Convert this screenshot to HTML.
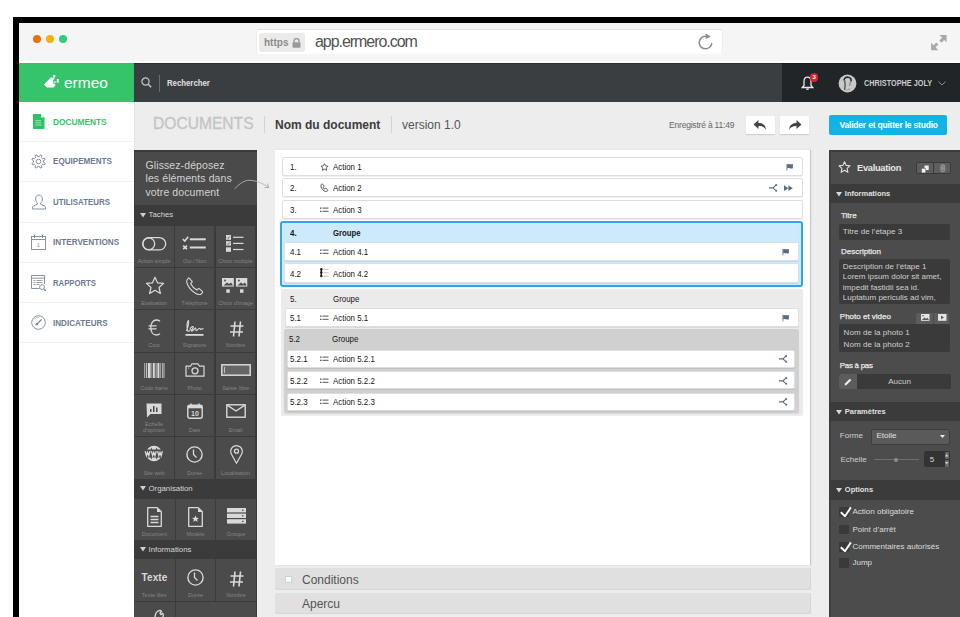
<!DOCTYPE html>
<html><head><meta charset="utf-8">
<style>
*{margin:0;padding:0;box-sizing:border-box}
html,body{width:960px;height:617px;overflow:hidden;background:#fff;font-family:"Liberation Sans",sans-serif}
.a{position:absolute}
#frame{left:13px;top:17px;width:960px;height:620px;background:#000}
#chrome{left:19px;top:23px;width:941px;height:40px;background:#f5f5f5}
.dot{width:8px;height:8px;border-radius:50%;top:35px}
#url{left:256px;top:29px;width:467px;height:25px;background:#fff;border-top:1px solid #e2e2e2;border-left:1px solid #ececec;border-right:1px solid #ececec;border-radius:3px}
#secbox{left:259px;top:33px;width:46px;height:19px;background:#ebebeb;border-radius:3px;color:#8c8c8c;font-size:10px;font-weight:bold;line-height:19px;padding-left:5px}
#urltext{left:315px;top:32px;font-size:16px;color:#525252;line-height:20px;letter-spacing:-1.05px}
#logo{left:19px;top:63px;width:115px;height:39px;background:#35c46a}
#hdr{left:134px;top:63px;width:648px;height:39px;background:#3b3e41}
#hdr2{left:782px;top:63px;width:178px;height:39px;background:#222528}
#side{left:19px;top:102px;width:115px;height:515px;background:#fff}
.mi{left:19px;width:115px;height:40px;border-bottom:1px solid #eeeff1}
.mt{position:absolute;font-size:9.3px;font-weight:bold;color:#6e7a8e;left:52.9px;line-height:11px;white-space:nowrap}
#main{left:134px;top:102px;width:826px;height:515px;background:#ededed;border-left:1px solid #e4e4e4}
#tools{left:134px;top:150px;width:123px;height:467px;background:#4a4a4a}
.lbl{font-size:5.5px;color:#858585;text-align:center;line-height:8px;white-space:nowrap}
.dt{font-size:8.8px;color:#161616;line-height:10px;white-space:nowrap;transform:scaleX(0.9);transform-origin:0 0}
#doc{left:275px;top:150px;width:535px;height:415px;background:#fff}
#rp{left:829px;top:150px;width:131px;height:467px;background:#4a4a4a}
</style></head><body>
<div class="a" id="frame"></div>
<div class="a" id="chrome"></div>
<div class="a dot" style="left:33px;background:#e8710a"></div>
<div class="a dot" style="left:46px;background:#f5b10f"></div>
<div class="a dot" style="left:59px;background:#35c97a"></div>
<div class="a" id="url"></div>
<div class="a" id="secbox">https</div>
<div class="a" id="urltext">app.ermero.com</div>
<div class="a" style="left:19px;top:61px;width:941px;height:2px;background:#fff"></div>
<div class="a" id="logo"></div>
<div class="a" id="hdr"></div>
<div class="a" id="hdr2"></div>
<div class="a" style="left:134px;top:63px;width:826px;height:1px;background:rgba(0,0,0,0.25)"></div>

<!-- browser chrome details -->
<svg class="a" style="left:292px;top:38px" width="9" height="10" viewBox="0 0 9 10"><path d="M2 4.5V3a2.5 2.5 0 0 1 5 0v1.5" fill="none" stroke="#9a9a9a" stroke-width="1.4"/><rect x="0.5" y="4.3" width="8" height="5.5" rx="1" fill="#9a9a9a"/></svg>
<svg class="a" style="left:697px;top:33px" width="17" height="17" viewBox="0 0 17 17"><path d="M8.8 3.2A6.3 6.3 0 1 0 14.8 10" fill="none" stroke="#8c8c8c" stroke-width="1.5"/><path d="M8.7 0.6L8.7 6.1 13.8 3.4z" fill="#8c8c8c"/></svg>
<svg class="a" style="left:929px;top:33px" width="18" height="18" viewBox="0 0 18 18"><path d="M10.4 2.1H17.6V9.3L15.2 6.9 12.4 9.7 10.3 7.6 13.1 4.8z M2.1 9.8L4.5 12.2 7.3 9.4 9.4 11.5 6.6 14.3 9.2 17.2H2.1z" fill="#a9a9a9"/></svg>
<!-- logo -->
<svg class="a" style="left:40px;top:72px" width="24" height="20" viewBox="0 0 24 20"><path d="M3.9 12.5L11.2 5.2 14.6 6.6 13 8.6 13.2 11.2 15.8 12.8 13.6 15.6 7 15.5z" fill="#fff"/><rect x="13.2" y="3" width="2" height="2.6" fill="#fff"/><rect x="16.8" y="7" width="2" height="3.6" fill="#fff"/><rect x="13.8" y="9.2" width="1.8" height="1.8" fill="#fff" opacity="0.8"/></svg>
<div class="a" style="left:64px;top:74px;font-size:15.5px;color:#fff;line-height:18px">ermeo</div>
<!-- search -->
<svg class="a" style="left:141px;top:77px" width="11" height="11" viewBox="0 0 11 11"><circle cx="4.5" cy="4.5" r="3.6" fill="none" stroke="#c8c8c8" stroke-width="1.2"/><path d="M7.2 7.2L10.2 10.2" stroke="#c8c8c8" stroke-width="1.4"/></svg>
<div class="a" style="left:159px;top:75px;width:1px;height:17px;background:#6a6d70"></div>
<div class="a" style="left:166.5px;top:78px;font-size:9px;font-weight:bold;color:#e0e0e0;line-height:11px;white-space:nowrap;transform:scaleX(0.865);transform-origin:0 0">Rechercher</div>
<!-- bell -->
<svg class="a" style="left:801px;top:75px" width="13" height="16" viewBox="0 0 13 16"><path d="M6.5 2.2C4 2.2 3 4.3 3 6.5v4L1.3 12.5h10.4L10 10.5v-4C10 4.3 9 2.2 6.5 2.2z" fill="none" stroke="#e6e6e6" stroke-width="1.3"/><path d="M5 13.5a1.5 1.5 0 0 0 3 0" fill="#e6e6e6"/></svg>
<div class="a" style="left:810px;top:73.2px;width:8.4px;height:8.4px;border-radius:50%;background:#e0202e;color:#fff;font-size:6px;line-height:8.4px;text-align:center;font-weight:bold">3</div>
<!-- avatar -->
<svg class="a" style="left:838px;top:74px" width="19" height="19" viewBox="0 0 19 19"><circle cx="9.5" cy="9.5" r="8.9" fill="#c9c9c9"/><path d="M6 6.5C6 4 8 3 10 3.2 12.5 3.5 13.5 5 13 7.5" fill="none" stroke="#2a2a2a" stroke-width="1.6"/><path d="M7 6.5C6.5 9 7.5 10.5 7 12.5 6.8 14 6.5 15 7 16" fill="none" stroke="#333" stroke-width="1.1"/><path d="M12 8c.3 1.5 0 3-.8 3.8" fill="none" stroke="#555" stroke-width="0.8"/><path d="M9 16.5c.5-1 1.5-1.5 3-1.5" fill="none" stroke="#777" stroke-width="0.8"/></svg>
<div class="a" style="left:863.5px;top:78px;font-size:9px;font-weight:bold;color:#c9cbcd;line-height:11px;white-space:nowrap;transform:scaleX(0.81);transform-origin:0 0">CHRISTOPHE JOLY</div>
<svg class="a" style="left:938px;top:81px" width="8" height="5" viewBox="0 0 8 5"><path d="M0.5 0.5L4 4 7.5 0.5" fill="none" stroke="#8a8c8e" stroke-width="1"/></svg>
<div class="a" id="side"></div>
<div class="a" id="main"></div>


<!-- main header -->
<div class="a" style="left:152.5px;top:113.5px;font-size:16.7px;color:#c4c4c4;line-height:20px;white-space:nowrap;transform:scaleX(0.935);transform-origin:0 0;-webkit-text-stroke:0.3px #c4c4c4">DOCUMENTS</div>
<div class="a" style="left:264px;top:116px;width:1px;height:17px;background:#d4d4d4"></div>
<div class="a" style="left:275px;top:118px;font-size:12px;font-weight:bold;color:#3c3c3c;line-height:14px">Nom du document</div>
<div class="a" style="left:391px;top:116px;width:1px;height:17px;background:#d4d4d4"></div>
<div class="a" style="left:402px;top:118px;font-size:12px;color:#555;line-height:14px">version 1.0</div>
<div class="a" style="left:669px;top:120px;font-size:8.5px;color:#666;letter-spacing:-0.2px;line-height:11px">Enregistré à 11:49</div>
<div class="a" style="left:746px;top:116px;width:29px;height:18px;background:#fff;box-shadow:0 1px 1px rgba(0,0,0,0.12)"></div>
<svg class="a" style="left:752px;top:119px" width="17" height="12" viewBox="0 0 17 12"><path d="M6.5 1L1.5 5.5 6.5 10V7C10.5 7 12.5 8 14 11 13.5 6 11 4 6.5 4z" fill="#444"/></svg>
<div class="a" style="left:780px;top:116px;width:29px;height:18px;background:#fff;box-shadow:0 1px 1px rgba(0,0,0,0.12)"></div>
<svg class="a" style="left:786px;top:119px" width="17" height="12" viewBox="0 0 17 12"><path d="M10.5 1L15.5 5.5 10.5 10V7C6.5 7 4.5 8 3 11 3.5 6 6 4 10.5 4z" fill="#444"/></svg>
<div class="a" style="left:829px;top:115px;width:118px;height:20px;background:#12b2e6;border-radius:2px;color:#fff;font-size:8.5px;font-weight:bold;letter-spacing:-0.2px;line-height:20px;padding-left:10.5px;white-space:nowrap">Valider et quitter le studio</div>
<!-- sidebar items -->
<div class="a" style="left:19px;top:141px;width:115px;height:1px;background:#f0f1f3"></div>
<div class="a" style="left:19px;top:181px;width:115px;height:1px;background:#f0f1f3"></div>
<div class="a" style="left:19px;top:222px;width:115px;height:1px;background:#f0f1f3"></div>
<div class="a" style="left:19px;top:262px;width:115px;height:1px;background:#f0f1f3"></div>
<div class="a" style="left:19px;top:302px;width:115px;height:1px;background:#f0f1f3"></div>
<div class="a" style="left:19px;top:342px;width:115px;height:1px;background:#f0f1f3"></div>
<svg class="a" style="left:33px;top:114px" width="12" height="15" viewBox="0 0 12 15"><path d="M0 0H8L11.5 3.5V15H0z" fill="#2fc165"/><path d="M8 0V3.5H11.5" fill="#fff" opacity="0.85"/><g fill="#fff" opacity="0.45"><rect x="2.3" y="6" width="6" height="1.2"/><rect x="2.3" y="8.2" width="6" height="1.2"/><rect x="2.3" y="10.4" width="6.5" height="1.2"/></g></svg>
<div class="a mt" style="top:117.36px;transform:scaleX(0.894);transform-origin:0 0;color:#35c46a">DOCUMENTS</div>
<svg class="a" style="left:31px;top:153.5px" width="15" height="15" viewBox="0 0 15 15"><path d="M12.42 8.40 L14.10 9.14 L13.33 11.01 L11.61 10.34 L10.34 11.61 L11.01 13.33 L9.14 14.10 L8.40 12.42 L6.60 12.42 L5.86 14.10 L3.99 13.33 L4.66 11.61 L3.39 10.34 L1.67 11.01 L0.90 9.14 L2.58 8.40 L2.58 6.60 L0.90 5.86 L1.67 3.99 L3.39 4.66 L4.66 3.39 L3.99 1.67 L5.86 0.90 L6.60 2.58 L8.40 2.58 L9.14 0.90 L11.01 1.67 L10.34 3.39 L11.61 4.66 L13.33 3.99 L14.10 5.86 L12.42 6.60z" fill="none" stroke="#8790a2" stroke-width="0.95" stroke-linejoin="round"/><circle cx="7.5" cy="7.5" r="2.3" fill="none" stroke="#8790a2" stroke-width="0.95"/></svg>
<div class="a mt" style="top:156.16px;transform:scaleX(0.871);transform-origin:0 0">EQUIPEMENTS</div>
<svg class="a" style="left:32px;top:194px" width="14" height="16" viewBox="0 0 14 16"><path d="M7 1C4.8 1 3.6 2.8 3.6 5c0 1.8.8 3.2 1.8 4v1.2L1 12.2c-.4.2-.5.5-.5.9V15h13v-1.9c0-.4-.1-.7-.5-.9L8.6 10.2V9c1-.8 1.8-2.2 1.8-4C10.4 2.8 9.2 1 7 1z" fill="none" stroke="#7d879a" stroke-width="0.9"/></svg>
<div class="a mt" style="top:197.06px;transform:scaleX(0.852);transform-origin:0 0">UTILISATEURS</div>
<svg class="a" style="left:31px;top:234px" width="15" height="16" viewBox="0 0 15 16"><rect x="0.5" y="2.5" width="14" height="13" fill="none" stroke="#7d879a" stroke-width="0.9"/><path d="M0.5 5.5h14" stroke="#7d879a" stroke-width="0.9"/><path d="M3.5 0.5v3.5M11.5 0.5v3.5" stroke="#7d879a" stroke-width="1.1"/><text x="6" y="12.5" font-size="5" fill="#7d879a" font-family="Liberation Sans">1</text></svg>
<div class="a mt" style="top:237.16px;transform:scaleX(0.880);transform-origin:0 0">INTERVENTIONS</div>
<svg class="a" style="left:31px;top:275px" width="16" height="17" viewBox="0 0 16 17"><path d="M13.5 9V0.5H0.5v13h8" fill="none" stroke="#7d879a" stroke-width="0.9"/><path d="M0.5 3.2h13" stroke="#7d879a" stroke-width="0.9"/><g stroke="#7d879a" stroke-width="0.8"><path d="M2.5 5.5h2M2.5 7.5h2M2.5 9.5h2M5.5 5.5h6M5.5 7.5h6M5.5 9.5h3"/></g><circle cx="11" cy="12" r="2.4" fill="#fff" stroke="#7d879a" stroke-width="0.9"/><path d="M12.8 13.8L15 16" stroke="#7d879a" stroke-width="1.1"/></svg>
<div class="a mt" style="top:277.71px;transform:scaleX(0.829);transform-origin:0 0">RAPPORTS</div>
<svg class="a" style="left:31px;top:315px" width="15" height="15" viewBox="0 0 15 15"><circle cx="7.5" cy="7.5" r="6.8" fill="none" stroke="#7d879a" stroke-width="0.9"/><path d="M5.5 9.5L10.5 4.5" stroke="#7d879a" stroke-width="1.2"/><circle cx="5.8" cy="9.2" r="1.2" fill="#7d879a"/><path d="M3 4.5A5 5 0 0 1 7.5 2.5" fill="none" stroke="#7d879a" stroke-width="0.6"/></svg>
<div class="a mt" style="top:318.11px;transform:scaleX(0.871);transform-origin:0 0">INDICATEURS</div>
<div class="a" id="tools"></div>
<div class="a" style="left:134px;top:150px;width:123px;height:1.5px;background:#3a3a3a"></div>
<div class="a" style="left:134px;top:150px;width:1px;height:467px;background:#3c3c3c"></div>

<div class="a" style="left:145.5px;top:158.5px;font-size:10.5px;color:#d2d2d2;line-height:13.8px;white-space:nowrap;letter-spacing:0.1px">Glissez-déposez<br>les éléments dans<br>votre document</div>
<svg class="a" style="left:232px;top:176px" width="42" height="18" viewBox="0 0 42 18"><path d="M2.8 12.7C8 7 13 4.3 17 4.3 24 4.3 31 7.5 36.9 11.4" fill="none" stroke="#b4b4b4" stroke-width="0.9"/><path d="M35.3 7.5L36.9 11.4 32.5 11.6" fill="none" stroke="#a8a8a8" stroke-width="0.9"/></svg>
<!--TOOLS-->
<div class="a" style="left:134px;top:205px;width:123px;height:412px;background:#3b3b3b"></div>
<div class="a" style="left:134px;top:205.5px;width:123px;height:19.5px;background:#3b3b3b"></div>
<svg class="a" style="left:139.5px;top:213.05px" width="6" height="5" viewBox="0 0 6 5"><path d="M0 0h6L3 4.5z" fill="#d0d0d0"/></svg>
<div class="a" style="left:148.5px;top:210.25px;font-size:7.8px;color:#d6d6d6;line-height:10px">Taches</div>
<div class="a" style="left:134px;top:225.5px;width:40px;height:41.5px;background:#4b4b4b"></div>
<div class="a" style="left:141.8px;top:236.5px;line-height:0"><svg width="25" height="14" viewBox="0 0 25 14"><rect x="0.7" y="0.7" width="23" height="12.2" rx="6.1" fill="none" stroke="#d9d9d9" stroke-width="1.3"/><circle cx="6.8" cy="6.8" r="5.9" fill="none" stroke="#d9d9d9" stroke-width="1.3"/></svg></div>
<div class="a lbl" style="left:134.0px;top:256.5px;width:40px">Action simple</div>
<div class="a" style="left:175px;top:225.5px;width:39.2px;height:41.5px;background:#4b4b4b"></div>
<div class="a" style="left:182px;top:235.5px;line-height:0"><svg width="26" height="16" viewBox="0 0 26 16"><path d="M0.8 3.2L2.8 5 6.2 0.8" fill="none" stroke="#d9d9d9" stroke-width="1.6"/><rect x="7.8" y="2.3" width="16" height="2" fill="#d9d9d9"/><path d="M1.2 9.6L5 13.2M5 9.6L1.2 13.2" stroke="#d9d9d9" stroke-width="1.6"/><rect x="7.8" y="10.5" width="16" height="2" fill="#d9d9d9"/></svg></div>
<div class="a lbl" style="left:175.0px;top:256.5px;width:39.2px">Oui / Non</div>
<div class="a" style="left:215.8px;top:225.5px;width:39.7px;height:41.5px;background:#4b4b4b"></div>
<div class="a" style="left:226px;top:234.8px;line-height:0"><svg width="20" height="18" viewBox="0 0 20 18"><g fill="#d9d9d9"><rect x="0" y="0" width="5" height="4.8"/><rect x="0" y="6.2" width="5" height="4.4"/><rect x="0" y="12.3" width="5" height="4.5"/><rect x="7" y="1.7" width="10.5" height="1.2"/><rect x="7" y="7.8" width="10.5" height="1.2"/><rect x="7" y="13.9" width="10.5" height="1.2"/></g><path d="M1 2.5l1 1 2-2.2M1 8.5l1 1 2-2.2" fill="none" stroke="#4b4b4b" stroke-width="0.8"/></svg></div>
<div class="a lbl" style="left:215.8px;top:256.5px;width:39.7px">Choix multiple</div>
<div class="a" style="left:134px;top:267.8px;width:40px;height:41.5px;background:#4b4b4b"></div>
<div class="a" style="left:144.5px;top:275.8px;line-height:0"><svg width="20" height="19" viewBox="0 0 20 19"><path d="M10 1.2l2.5 5.6 6.1.6-4.6 4.1 1.4 6-5.4-3.2-5.4 3.2 1.4-6L1.4 7.4l6.1-.6z" fill="none" stroke="#d9d9d9" stroke-width="1.2" stroke-linejoin="round"/></svg></div>
<div class="a lbl" style="left:134.0px;top:299.0px;width:40px">Evaluation</div>
<div class="a" style="left:175px;top:267.8px;width:39.2px;height:41.5px;background:#4b4b4b"></div>
<div class="a" style="left:185.5px;top:276.5px;line-height:0"><svg width="18" height="18" viewBox="0 0 18 18"><path d="M3.2 1.2L5.8 4c.4.4.4 1 0 1.4L4.6 6.6c1.3 2.8 3.5 5 6.3 6.4l1.2-1.2c.4-.4 1-.4 1.4 0l2.8 2.6c.4.4.4 1 0 1.4l-1.4 1.4C13.5 18 12 17.5 10 16.5 6 14.4 3.2 11.2 1.4 7.2.6 5.4.4 4 1 3l1.3-1.8c.3-.4.6-.4.9 0z" fill="none" stroke="#d9d9d9" stroke-width="1.1"/></svg></div>
<div class="a lbl" style="left:175.0px;top:299.0px;width:39.2px">Téléphone</div>
<div class="a" style="left:215.8px;top:267.8px;width:39.7px;height:41.5px;background:#4b4b4b"></div>
<div class="a" style="left:221.8px;top:278.2px;line-height:0"><svg width="26" height="15" viewBox="0 0 26 15"><g fill="#d9d9d9"><rect x="0" y="0" width="11.8" height="8.6"/><rect x="13.9" y="0" width="11.4" height="8.6"/><rect x="4.3" y="11.3" width="3.5" height="3.5"/><rect x="18" y="11.3" width="3.5" height="3.5"/></g><g fill="#4b4b4b"><path d="M1.5 7.5L5 4.5 7 6 9 4.5 11 7.5z"/><path d="M15.4 7.5L18.9 4.5 20.9 6 22.9 4.5 24.8 7.5z"/><circle cx="3" cy="2.5" r="1"/><circle cx="16.9" cy="2.5" r="1"/></g></svg></div>
<div class="a lbl" style="left:215.8px;top:299.0px;width:39.7px">Choix d'image</div>
<div class="a" style="left:134px;top:310.2px;width:40px;height:41.5px;background:#4b4b4b"></div>
<div class="a" style="left:147.5px;top:319px;line-height:0"><svg width="13" height="17" viewBox="0 0 13 17"><path d="M12 2.2C11 1.4 9.8 1 8.5 1 5 1 2.8 4.2 2.8 8.5S5 16 8.5 16c1.3 0 2.5-.4 3.5-1.2" fill="none" stroke="#d9d9d9" stroke-width="1.3"/><path d="M0.5 6.8h8M0.5 9.8h8" stroke="#d9d9d9" stroke-width="1.2"/></svg></div>
<div class="a lbl" style="left:134.0px;top:340.8px;width:40px">Cout</div>
<div class="a" style="left:175px;top:310.2px;width:39.2px;height:41.5px;background:#4b4b4b"></div>
<div class="a" style="left:185px;top:319px;line-height:0"><svg width="19" height="17" viewBox="0 0 19 17"><path d="M1.5 12C3 8 4 4 3.5 1.5 2 2 1.5 7 2.5 11.5c.5 1.3 2 1 3.5-1.5M5 10c1-2.5 3-3 3.3-1.8C8.5 9.5 6 11 6.5 12s3-2.5 4-3c.8.3-.2 2.5.8 2.7 1 .1 2.2-2.3 3.2-2.5.8 0 .5 1.5 1.5 1.2l2.5-.8" fill="none" stroke="#d9d9d9" stroke-width="1.1"/><rect x="0.5" y="15" width="18" height="1.8" fill="#d9d9d9"/></svg></div>
<div class="a lbl" style="left:175.0px;top:340.8px;width:39.2px">Signature</div>
<div class="a" style="left:215.8px;top:310.2px;width:39.7px;height:41.5px;background:#4b4b4b"></div>
<div class="a" style="left:229.8px;top:320.5px;line-height:0"><svg width="14" height="16" viewBox="0 0 14 16"><path d="M5 0.5L3.5 15.5M10.5 0.5L9 15.5M0.5 5h13M0 11h13" stroke="#d9d9d9" stroke-width="1.6"/></svg></div>
<div class="a lbl" style="left:215.8px;top:340.8px;width:39.7px">Nombre</div>
<div class="a" style="left:134px;top:352.5px;width:40px;height:41.5px;background:#4b4b4b"></div>
<div class="a" style="left:143.5px;top:362.8px;line-height:0"><svg width="21" height="15" viewBox="0 0 21 15"><g fill="#d9d9d9"><rect x="0" y="0" width="1" height="15" opacity="0.6"/><rect x="1.8" y="0" width="1.4" height="15" opacity="0.8"/><rect x="4" y="0" width="2.6" height="15"/><rect x="7.4" y="0" width="0.9" height="15" opacity="0.7"/><rect x="9" y="0" width="1.8" height="15"/><rect x="11.6" y="0" width="1" height="15" opacity="0.8"/><rect x="13.4" y="0" width="2" height="15"/><rect x="16.2" y="0" width="0.9" height="15" opacity="0.7"/><rect x="18" y="0" width="1.6" height="15" opacity="0.7"/><rect x="20.2" y="0" width="0.8" height="15" opacity="0.5"/></g></svg></div>
<div class="a lbl" style="left:134.0px;top:384.0px;width:40px">Code barre</div>
<div class="a" style="left:175px;top:352.5px;width:39.2px;height:41.5px;background:#4b4b4b"></div>
<div class="a" style="left:184.8px;top:363px;line-height:0"><svg width="20" height="14" viewBox="0 0 20 14"><path d="M1 3.2h4.5L7 0.8h6l1.5 2.4H19v10H1z" fill="none" stroke="#d9d9d9" stroke-width="1.2" stroke-linejoin="round"/><circle cx="10" cy="7.8" r="3" fill="none" stroke="#d9d9d9" stroke-width="1.3"/><circle cx="3.5" cy="5" r="0.6" fill="#d9d9d9"/></svg></div>
<div class="a lbl" style="left:175.0px;top:384.0px;width:39.2px">Photo</div>
<div class="a" style="left:215.8px;top:352.5px;width:39.7px;height:41.5px;background:#4b4b4b"></div>
<div class="a" style="left:220.5px;top:364px;line-height:0"><svg width="30" height="12" viewBox="0 0 30 12"><rect x="0.8" y="0.8" width="28.4" height="10.4" fill="#666" stroke="#d9d9d9" stroke-width="1.5"/><rect x="3" y="3" width="0.8" height="6" fill="#d9d9d9"/></svg></div>
<div class="a lbl" style="left:215.8px;top:384.0px;width:39.7px">Saisie libre</div>
<div class="a" style="left:134px;top:394.8px;width:40px;height:41.5px;background:#4b4b4b"></div>
<div class="a" style="left:146px;top:402.8px;line-height:0"><svg width="16" height="15" viewBox="0 0 16 15"><path d="M0.5 0.5h15v10.5H4.5L1 14.5z" fill="#d9d9d9"/><g fill="#4b4b4b"><rect x="4" y="6" width="1.5" height="3"/><rect x="7" y="3" width="1.5" height="6"/><rect x="10" y="4.5" width="1.5" height="4.5"/></g></svg></div>
<div class="a lbl" style="left:134px;top:420.8px;width:40px;line-height:6.5px">Echelle<br>d'opinion</div>
<div class="a" style="left:175px;top:394.8px;width:39.2px;height:41.5px;background:#4b4b4b"></div>
<div class="a" style="left:187px;top:402.8px;line-height:0"><svg width="16" height="16" viewBox="0 0 16 16"><rect x="0.8" y="2.3" width="14.4" height="13" rx="2" fill="none" stroke="#d9d9d9" stroke-width="1.4"/><rect x="0.8" y="2.3" width="14.4" height="3" fill="#d9d9d9"/><path d="M4 0.5v3M12 0.5v3" stroke="#d9d9d9" stroke-width="1.5"/><text x="8" y="13.2" font-size="7" font-weight="bold" fill="#d9d9d9" text-anchor="middle" font-family="Liberation Sans">10</text></svg></div>
<div class="a lbl" style="left:175.0px;top:426.4px;width:39.2px">Date</div>
<div class="a" style="left:215.8px;top:394.8px;width:39.7px;height:41.5px;background:#4b4b4b"></div>
<div class="a" style="left:225.8px;top:403.8px;line-height:0"><svg width="20" height="14" viewBox="0 0 20 14"><rect x="0.8" y="0.8" width="18.4" height="12.4" fill="none" stroke="#d9d9d9" stroke-width="1.4"/><path d="M0.8 0.8L10 7 19.2 0.8" fill="none" stroke="#d9d9d9" stroke-width="1.4"/></svg></div>
<div class="a lbl" style="left:215.8px;top:426.4px;width:39.7px">Email</div>
<div class="a" style="left:134px;top:437.2px;width:40px;height:41.5px;background:#4b4b4b"></div>
<div class="a" style="left:143.8px;top:445.3px;line-height:0"><svg width="20" height="17" viewBox="0 0 20 17"><path d="M3.2 4.6A8 8 0 0 1 16.8 4.6z" fill="#d9d9d9"/><path d="M3.2 12.4A8 8 0 0 0 16.8 12.4z" fill="#d9d9d9"/><path d="M6.4 4.8L7.4 2.6 8.4 4.8zM11.6 4.8L12.6 2.6 13.6 4.8zM6.4 12.2L7.4 14.4 8.4 12.2zM11.6 12.2L12.6 14.4 13.6 12.2z" fill="#4b4b4b"/><path d="M1.2 6.2L2.4 10.6 3.6 7.4 4.8 10.6 6 6.2M7.4 6.2L8.6 10.6 9.8 7.4 11 10.6 12.2 6.2M13.6 6.2L14.8 10.6 16 7.4 17.2 10.6 18.4 6.2" fill="none" stroke="#d9d9d9" stroke-width="1.3" stroke-linejoin="miter"/></svg></div>
<div class="a lbl" style="left:134.0px;top:469.0px;width:40px">Site web</div>
<div class="a" style="left:175px;top:437.2px;width:39.2px;height:41.5px;background:#4b4b4b"></div>
<div class="a" style="left:186.3px;top:446px;line-height:0"><svg width="17" height="17" viewBox="0 0 17 17"><circle cx="8.5" cy="8.5" r="7.6" fill="none" stroke="#d9d9d9" stroke-width="1.4"/><path d="M7.5 3.5v5l3 3" fill="none" stroke="#d9d9d9" stroke-width="1.3"/></svg></div>
<div class="a lbl" style="left:175.0px;top:469.0px;width:39.2px">Durée</div>
<div class="a" style="left:215.8px;top:437.2px;width:39.7px;height:41.5px;background:#4b4b4b"></div>
<div class="a" style="left:229.5px;top:444.6px;line-height:0"><svg width="13" height="19" viewBox="0 0 13 19"><path d="M6.5 18.3L1.6 9.5C.9 8.3.7 7.4.7 6.4a5.8 5.8 0 0 1 11.6 0c0 1-.2 1.9-.9 3.1z" fill="none" stroke="#d9d9d9" stroke-width="1.2" stroke-linejoin="round"/><circle cx="6.5" cy="6.2" r="2" fill="none" stroke="#d9d9d9" stroke-width="1.3"/></svg></div>
<div class="a lbl" style="left:215.8px;top:469.0px;width:39.7px">Localisation</div>
<div class="a" style="left:134px;top:478.8px;width:123px;height:19.7px;background:#3b3b3b"></div>
<svg class="a" style="left:139.5px;top:486.45000000000005px" width="6" height="5" viewBox="0 0 6 5"><path d="M0 0h6L3 4.5z" fill="#d0d0d0"/></svg>
<div class="a" style="left:148.5px;top:483.65000000000003px;font-size:7.8px;color:#d6d6d6;line-height:10px">Organisation</div>
<div class="a" style="left:134px;top:499px;width:40.8px;height:41px;background:#4b4b4b"></div>
<div class="a" style="left:146.8px;top:506.5px;line-height:0"><svg width="15" height="20" viewBox="0 0 15 20"><path d="M0.7 0.7h9.5l4.1 4.1v14.5H0.7z" fill="none" stroke="#d9d9d9" stroke-width="1.3" stroke-linejoin="round"/><path d="M10 0.7v4.3h4.3" fill="#d9d9d9"/><path d="M3.5 9.5h8M3.5 12.5h8M3.5 15.5h8" stroke="#d9d9d9" stroke-width="1.3"/></svg></div>
<div class="a lbl" style="left:134.0px;top:530.2px;width:40.8px">Document</div>
<div class="a" style="left:175.9px;top:499px;width:39.3px;height:41px;background:#4b4b4b"></div>
<div class="a" style="left:188px;top:506.5px;line-height:0"><svg width="15" height="20" viewBox="0 0 15 20"><path d="M0.7 0.7h9.5l4.1 4.1v14.5H0.7z" fill="none" stroke="#d9d9d9" stroke-width="1.3" stroke-linejoin="round"/><path d="M10 0.7v4.3h4.3" fill="#d9d9d9"/><path d="M7.5 8.5l1 2.2 2.4.2-1.8 1.6.6 2.4-2.2-1.3-2.2 1.3.6-2.4-1.8-1.6 2.4-.2z" fill="#d9d9d9"/></svg></div>
<div class="a lbl" style="left:175.9px;top:530.2px;width:39.3px">Modèle</div>
<div class="a" style="left:216.3px;top:499px;width:39.5px;height:41px;background:#4b4b4b"></div>
<div class="a" style="left:226.9px;top:508.2px;line-height:0"><svg width="19" height="16" viewBox="0 0 19 16"><g fill="#d9d9d9"><rect x="0" y="0" width="19" height="4.4"/><rect x="0" y="5.6" width="19" height="4.4"/><rect x="0" y="11.2" width="19" height="4.4"/></g><g fill="#4b4b4b"><rect x="15" y="1.6" width="1.5" height="1.2"/><rect x="15" y="7.2" width="1.5" height="1.2"/><rect x="15" y="12.8" width="1.5" height="1.2"/></g></svg></div>
<div class="a lbl" style="left:216.3px;top:530.2px;width:39.5px">Groupe</div>
<div class="a" style="left:134px;top:540px;width:123px;height:19.3px;background:#3b3b3b"></div>
<svg class="a" style="left:139.5px;top:547.4499999999999px" width="6" height="5" viewBox="0 0 6 5"><path d="M0 0h6L3 4.5z" fill="#d0d0d0"/></svg>
<div class="a" style="left:148.5px;top:544.65px;font-size:7.8px;color:#d6d6d6;line-height:10px">Informations</div>
<div class="a" style="left:134px;top:559.3px;width:40.8px;height:42px;background:#4b4b4b"></div>
<div class="a" style="left:141.5px;top:571.5px;line-height:0"><div style="font-size:10px;font-weight:bold;color:#d9d9d9;line-height:12px;letter-spacing:0.1px">Texte</div></div>
<div class="a lbl" style="left:134.0px;top:591.3px;width:40.8px">Texte libre</div>
<div class="a" style="left:175.9px;top:559.3px;width:39.3px;height:42px;background:#4b4b4b"></div>
<div class="a" style="left:187px;top:568.8px;line-height:0"><svg width="17" height="17" viewBox="0 0 17 17"><circle cx="8.5" cy="8.5" r="7.6" fill="none" stroke="#d9d9d9" stroke-width="1.4"/><path d="M7.5 3.5v5l3 3" fill="none" stroke="#d9d9d9" stroke-width="1.3"/></svg></div>
<div class="a lbl" style="left:175.9px;top:591.3px;width:39.3px">Durée</div>
<div class="a" style="left:216.3px;top:559.3px;width:39.5px;height:42px;background:#4b4b4b"></div>
<div class="a" style="left:229.8px;top:571px;line-height:0"><svg width="14" height="16" viewBox="0 0 14 16"><path d="M5 0.5L3.5 15.5M10.5 0.5L9 15.5M0.5 5h13M0 11h13" stroke="#d9d9d9" stroke-width="1.6"/></svg></div>
<div class="a lbl" style="left:216.3px;top:591.3px;width:39.5px">Nombre</div>
<div class="a" style="left:134px;top:601.6px;width:40.8px;height:20px;background:#4b4b4b"></div>
<div class="a" style="left:175.9px;top:601.6px;width:80px;height:20px;background:#4b4b4b"></div>
<div class="a" style="left:154px;top:608.5px;line-height:0"><svg width="11" height="10" viewBox="0 0 11 10"><path d="M1 9.5C1 6 2 3 4 2 5.5 1.3 7 1.5 7.5 2.5L6 4 7 5.5 8.7 4.3C9.5 5.5 9.5 7 8.5 8.5" fill="none" stroke="#d9d9d9" stroke-width="1.3"/></svg></div>
<!--/TOOLS-->
<!--DOC-->
<div class="a" style="left:275px;top:150px;width:535px;height:415px;background:#fff;box-shadow:1px 0 1px rgba(0,0,0,0.16)"></div>
<div class="a" style="left:281.5px;top:157px;width:521.5px;height:19px;background:#fff;border:1px solid #dedede;border-radius:2px;box-shadow:0 1px 0 rgba(0,0,0,0.07)"></div>
<div class="a dt" style="left:290px;top:162.06px;">1.</div>
<svg class="a" style="left:320px;top:162.5px" width="9" height="8" viewBox="0 0 9 8"><path d="M4.5 0.6l1.1 2.3 2.5.3-1.9 1.7.5 2.5-2.2-1.3-2.2 1.3.5-2.5L.9 3.2l2.5-.3z" fill="none" stroke="#555" stroke-width="0.9" stroke-linejoin="round"/></svg>
<div class="a dt" style="left:333px;top:162.06px;">Action 1</div>
<svg class="a" style="left:785.6px;top:163.2px" width="8" height="8" viewBox="0 0 8 8"><path d="M1.2 1.2C2.8 0.2 4.2 2 6.9 1V5.2C4.2 6.2 2.8 4.4 1.2 5.4z" fill="#5b6b82"/><path d="M0.9 0.8v6.6" stroke="#5b6b82" stroke-width="0.8"/></svg>
<div class="a" style="left:281.5px;top:178.2px;width:521.5px;height:19.3px;background:#fff;border:1px solid #dedede;border-radius:2px;box-shadow:0 1px 0 rgba(0,0,0,0.07)"></div>
<div class="a dt" style="left:290px;top:183.41px;">2.</div>
<svg class="a" style="left:320px;top:182.75px" width="9" height="9" viewBox="0 0 9 9"><path d="M1.2 1.6C1.8 0.9 2.4 0.8 2.8 1.3L3.9 2.9C4.2 3.4 4 3.8 3.5 4.1 3.1 4.3 3.1 4.7 3.5 5.3 3.9 5.8 4.4 6 4.8 5.6 5.2 5.2 5.7 5.1 6.1 5.5L7.5 6.7C7.9 7.1 7.8 7.7 7.2 8.1 6.1 8.8 4.6 8.6 3 7 1.2 5.2 0.5 3 1.2 1.6z" fill="none" stroke="#444" stroke-width="0.9"/></svg>
<div class="a dt" style="left:333px;top:183.41px;">Action 2</div>
<svg class="a" style="left:769px;top:184.04999999999998px" width="9" height="8" viewBox="0 0 9 8"><path d="M0 3.9h3.8L7 1.2M3.8 3.9L7 6.6" fill="none" stroke="#5b6b82" stroke-width="1.1"/><circle cx="7.2" cy="1.1" r="1" fill="#5b6b82"/><circle cx="7.2" cy="6.7" r="1" fill="#5b6b82"/></svg>
<svg class="a" style="left:783.7px;top:184.65px" width="9" height="7" viewBox="0 0 9 7"><path d="M0 0.3L4.4 3.2 0 6.1zM4.4 0.3L8.8 3.2 4.4 6.1z" fill="#5b6b82"/></svg>
<div class="a" style="left:281.5px;top:200.2px;width:521.5px;height:19px;background:#fff;border:1px solid #dedede;border-radius:2px;box-shadow:0 1px 0 rgba(0,0,0,0.07)"></div>
<div class="a dt" style="left:290px;top:205.26px;">3.</div>
<svg class="a" style="left:320px;top:207.29999999999998px" width="9" height="6" viewBox="0 0 9 6"><g fill="#555"><rect x="0" y="0.5" width="1.5" height="1.3"/><rect x="2.5" y="0.6" width="6" height="1"/><rect x="0" y="3.7" width="1.5" height="1.3"/><rect x="2.5" y="3.8" width="6" height="1"/></g></svg>
<div class="a dt" style="left:333px;top:205.26px;">Action 3</div>
<div class="a" style="left:280.2px;top:221px;width:523px;height:65.5px;background:#cdeafb;border:2px solid #2ea6e6;border-radius:3px"></div>
<div class="a dt" style="left:289.5px;top:227.81px;font-weight:bold">4.</div>
<div class="a dt" style="left:332.8px;top:227.81px;font-weight:bold;font-size:8.6px">Groupe</div>
<div class="a" style="left:284.2px;top:241.8px;width:515px;height:18.8px;background:#fff;border:1px solid #dedede;border-radius:2px;box-shadow:0 1px 0 rgba(0,0,0,0.07)"></div>
<div class="a dt" style="left:290px;top:246.76000000000002px;">4.1</div>
<svg class="a" style="left:320px;top:248.8px" width="9" height="6" viewBox="0 0 9 6"><g fill="#555"><rect x="0" y="0.5" width="1.5" height="1.3"/><rect x="2.5" y="0.6" width="6" height="1"/><rect x="0" y="3.7" width="1.5" height="1.3"/><rect x="2.5" y="3.8" width="6" height="1"/></g></svg>
<div class="a dt" style="left:333px;top:246.76000000000002px;">Action 4.1</div>
<svg class="a" style="left:782px;top:247.9px" width="8" height="8" viewBox="0 0 8 8"><path d="M1.2 1.2C2.8 0.2 4.2 2 6.9 1V5.2C4.2 6.2 2.8 4.4 1.2 5.4z" fill="#5b6b82"/><path d="M0.9 0.8v6.6" stroke="#5b6b82" stroke-width="0.8"/></svg>
<div class="a" style="left:284.2px;top:263.4px;width:515px;height:19.2px;background:#fff;border:1px solid #dedede;border-radius:2px;box-shadow:0 1px 0 rgba(0,0,0,0.07)"></div>
<div class="a dt" style="left:290px;top:268.56px;">4.2</div>
<svg class="a" style="left:320px;top:268.0px" width="9" height="11" viewBox="0 0 9 11"><g fill="#222"><circle cx="1.3" cy="1.3" r="1.25"/><circle cx="1.3" cy="4.6" r="1.25"/><circle cx="1.3" cy="7.9" r="1.25"/><rect x="0.6" y="1" width="1.4" height="7"/></g><g fill="#bbb"><rect x="3.5" y="0.8" width="5" height="0.9"/><rect x="3.5" y="4.3" width="5" height="0.9"/><rect x="3.5" y="7.8" width="5" height="0.9"/></g></svg>
<div class="a dt" style="left:333px;top:268.56px;">Action 4.2</div>
<div class="a" style="left:281.2px;top:288.6px;width:521.5px;height:126.4px;background:#ebebeb;border-radius:2px;box-shadow:0 1px 1px rgba(0,0,0,0.08)"></div>
<div class="a dt" style="left:289.6px;top:294.31px;">5.</div>
<div class="a dt" style="left:332.6px;top:294.31px;">Groupe</div>
<div class="a" style="left:284.6px;top:307.6px;width:514.4px;height:19px;background:#fff;border:1px solid #dedede;border-radius:2px;box-shadow:0 1px 0 rgba(0,0,0,0.07)"></div>
<div class="a dt" style="left:290px;top:312.66px;">5.1</div>
<svg class="a" style="left:320px;top:314.70000000000005px" width="9" height="6" viewBox="0 0 9 6"><g fill="#555"><rect x="0" y="0.5" width="1.5" height="1.3"/><rect x="2.5" y="0.6" width="6" height="1"/><rect x="0" y="3.7" width="1.5" height="1.3"/><rect x="2.5" y="3.8" width="6" height="1"/></g></svg>
<div class="a dt" style="left:333px;top:312.66px;">Action 5.1</div>
<svg class="a" style="left:782px;top:313.8px" width="8" height="8" viewBox="0 0 8 8"><path d="M1.2 1.2C2.8 0.2 4.2 2 6.9 1V5.2C4.2 6.2 2.8 4.4 1.2 5.4z" fill="#5b6b82"/><path d="M0.9 0.8v6.6" stroke="#5b6b82" stroke-width="0.8"/></svg>
<div class="a" style="left:284px;top:329.2px;width:515px;height:83.5px;background:#d0d0d0;border-radius:2px;box-shadow:0 1px 1px rgba(0,0,0,0.08)"></div>
<div class="a dt" style="left:289px;top:334.31px;">5.2</div>
<div class="a dt" style="left:332px;top:334.31px;">Groupe</div>
<div class="a" style="left:287.2px;top:349.6px;width:508px;height:18.2px;background:#fff;border:1px solid #dedede;border-radius:2px;box-shadow:0 1px 0 rgba(0,0,0,0.07)"></div>
<div class="a dt" style="left:289.5px;top:354.26000000000005px;">5.2.1</div>
<svg class="a" style="left:320px;top:356.30000000000007px" width="9" height="6" viewBox="0 0 9 6"><g fill="#555"><rect x="0" y="0.5" width="1.5" height="1.3"/><rect x="2.5" y="0.6" width="6" height="1"/><rect x="0" y="3.7" width="1.5" height="1.3"/><rect x="2.5" y="3.8" width="6" height="1"/></g></svg>
<div class="a dt" style="left:333px;top:354.26000000000005px;">Action 5.2.1</div>
<svg class="a" style="left:778.5px;top:354.90000000000003px" width="9" height="8" viewBox="0 0 9 8"><path d="M0 3.9h3.8L7 1.2M3.8 3.9L7 6.6" fill="none" stroke="#5b6b82" stroke-width="1.1"/><circle cx="7.2" cy="1.1" r="1" fill="#5b6b82"/><circle cx="7.2" cy="6.7" r="1" fill="#5b6b82"/></svg>
<div class="a" style="left:287.2px;top:371.2px;width:508px;height:18.2px;background:#fff;border:1px solid #dedede;border-radius:2px;box-shadow:0 1px 0 rgba(0,0,0,0.07)"></div>
<div class="a dt" style="left:289.5px;top:375.86px;">5.2.2</div>
<svg class="a" style="left:320px;top:377.90000000000003px" width="9" height="6" viewBox="0 0 9 6"><g fill="#555"><rect x="0" y="0.5" width="1.5" height="1.3"/><rect x="2.5" y="0.6" width="6" height="1"/><rect x="0" y="3.7" width="1.5" height="1.3"/><rect x="2.5" y="3.8" width="6" height="1"/></g></svg>
<div class="a dt" style="left:333px;top:375.86px;">Action 5.2.2</div>
<svg class="a" style="left:778.5px;top:376.5px" width="9" height="8" viewBox="0 0 9 8"><path d="M0 3.9h3.8L7 1.2M3.8 3.9L7 6.6" fill="none" stroke="#5b6b82" stroke-width="1.1"/><circle cx="7.2" cy="1.1" r="1" fill="#5b6b82"/><circle cx="7.2" cy="6.7" r="1" fill="#5b6b82"/></svg>
<div class="a" style="left:287.2px;top:392.6px;width:508px;height:18.2px;background:#fff;border:1px solid #dedede;border-radius:2px;box-shadow:0 1px 0 rgba(0,0,0,0.07)"></div>
<div class="a dt" style="left:289.5px;top:397.26000000000005px;">5.2.3</div>
<svg class="a" style="left:320px;top:399.30000000000007px" width="9" height="6" viewBox="0 0 9 6"><g fill="#555"><rect x="0" y="0.5" width="1.5" height="1.3"/><rect x="2.5" y="0.6" width="6" height="1"/><rect x="0" y="3.7" width="1.5" height="1.3"/><rect x="2.5" y="3.8" width="6" height="1"/></g></svg>
<div class="a dt" style="left:333px;top:397.26000000000005px;">Action 5.2.3</div>
<svg class="a" style="left:778.5px;top:397.90000000000003px" width="9" height="8" viewBox="0 0 9 8"><path d="M0 3.9h3.8L7 1.2M3.8 3.9L7 6.6" fill="none" stroke="#5b6b82" stroke-width="1.1"/><circle cx="7.2" cy="1.1" r="1" fill="#5b6b82"/><circle cx="7.2" cy="6.7" r="1" fill="#5b6b82"/></svg>
<div class="a" style="left:275px;top:568.3px;width:536px;height:21.6px;background:#e1e0e0;border-radius:2px;border-right:1px solid #d6d6d6;border-bottom:1px solid #d6d6d6"></div>
<div class="a" style="left:285px;top:576px;width:7px;height:7px;background:#fff;border:0.5px solid #d0d0d0"></div>
<div class="a" style="left:302px;top:572.5px;font-size:12px;color:#555;line-height:14px">Conditions</div>
<div class="a" style="left:275px;top:592.6px;width:536px;height:21.6px;background:#e1e0e0;border-radius:2px;border-right:1px solid #d6d6d6;border-bottom:1px solid #d6d6d6"></div>
<div class="a" style="left:302px;top:596.5px;font-size:12px;color:#555;line-height:14px">Apercu</div>
<!--/DOC-->
<!--RP-->
<div class="a" style="left:829px;top:150px;width:131px;height:467px;background:#4c4c4c"></div>
<div class="a" style="left:829px;top:150px;width:131px;height:1.5px;background:#3c3c3c"></div>
<div class="a" style="left:829px;top:150px;width:1.5px;height:467px;background:#3e3e3e"></div>
<svg class="a" style="left:838px;top:161px" width="13" height="13" viewBox="0 0 13 13"><path d="M6.5 0.8l1.6 3.6 3.9.4-2.9 2.6.8 3.9-3.4-2-3.4 2 .8-3.9L1 4.8l3.9-.4z" fill="none" stroke="#e0e0e0" stroke-width="1.1" stroke-linejoin="round"/></svg>
<div class="a" style="left:857px;top:162px;white-space:nowrap;font-size:9.3px;font-weight:bold;color:#e6e6e6;line-height:12px;letter-spacing:-0.3px">Evaluation</div>
<div class="a" style="left:916.3px;top:162.2px;width:34.6px;height:12.3px;background:#5e5e5e;border:1px solid #3a3a3a;border-radius:2px"></div>
<div class="a" style="left:933.3px;top:162.6px;width:1px;height:11.6px;background:#3a3a3a"></div>
<svg class="a" style="left:921px;top:164.5px" width="9" height="9" viewBox="0 0 9 9"><rect x="3.5" y="0.5" width="4.2" height="4.5" fill="#eee"/><rect x="0.3" y="3.2" width="4.5" height="4.8" fill="#5e5e5e"/><rect x="0.8" y="3.7" width="3.6" height="3.9" fill="#f2f2f2"/></svg>
<svg class="a" style="left:939.5px;top:164.3px" width="6" height="9" viewBox="0 0 6 9"><rect x="0.3" y="0.3" width="5" height="8" rx="2" fill="#8e8e8e"/><rect x="1.2" y="2" width="3.2" height="0.6" fill="#6a6a6a"/><rect x="1.2" y="6" width="3.2" height="0.6" fill="#6a6a6a"/></svg>
<div class="a" style="left:829px;top:184.2px;width:131px;height:19.3px;background:#3b3b3b"></div>
<svg class="a" style="left:835.8px;top:191.65px" width="6" height="5" viewBox="0 0 6 5"><path d="M0 0h6L3 4.5z" fill="#d8d8d8"/></svg>
<div class="a" style="left:844.8px;top:188.85px;white-space:nowrap;font-size:7.5px;font-weight:bold;color:#e0e0e0;line-height:10px">Informations</div>
<div class="a" style="left:841px;top:210.5px;white-space:nowrap;font-size:8px;color:#e6e6e6;line-height:10px;-webkit-text-stroke:0.25px #e6e6e6">Titre</div>
<div class="a" style="left:839px;top:223.5px;width:111px;height:16px;background:#3a3a3a;border-radius:2px"></div>
<div class="a" style="left:842.8px;top:226.5px;white-space:nowrap;font-size:8px;color:#cfcfcf;line-height:10px">Titre de l’étape 3</div>
<div class="a" style="left:841px;top:247px;white-space:nowrap;font-size:8px;color:#e6e6e6;line-height:10px;-webkit-text-stroke:0.25px #e6e6e6">Description</div>
<div class="a" style="left:839px;top:259.3px;width:111px;height:44.6px;background:#3a3a3a;border-radius:2px"></div>
<div class="a" style="left:842.8px;top:261.5px;white-space:nowrap;font-size:8px;color:#cfcfcf;line-height:10px;line-height:10.5px">Description de l’étape 1<br>Lorem ipsum dolor sit amet,<br>impedit fastidii sea id.<br>Luptatum periculis ad vim,</div>
<div class="a" style="left:839.8px;top:311.5px;white-space:nowrap;font-size:8px;color:#e6e6e6;line-height:10px;-webkit-text-stroke:0.25px #e6e6e6">Photo et video</div>
<div class="a" style="left:839px;top:323.8px;width:111px;height:28.6px;background:#3a3a3a;border-radius:2px"></div>
<div class="a" style="left:915.9px;top:312.7px;width:33.5px;height:11px;background:#5c5c5c;border-radius:2px 2px 0 0"></div>
<div class="a" style="left:932.6px;top:312.7px;width:1px;height:11px;background:#4a4a4a"></div>
<svg class="a" style="left:920.5px;top:314.3px" width="9" height="7" viewBox="0 0 9 7"><rect x="0" y="0" width="8.5" height="6.8" fill="#e4e4e4"/><path d="M0.8 6L3.5 3.5 5 4.8 6.5 3.8 8 6z" fill="#5c5c5c"/><circle cx="2" cy="1.8" r="0.8" fill="#5c5c5c"/></svg>
<svg class="a" style="left:937.5px;top:314.3px" width="9" height="7" viewBox="0 0 9 7"><rect x="0" y="0" width="8.5" height="6.8" fill="#e4e4e4"/><path d="M3 1.5L6 3.4 3 5.3z" fill="#5c5c5c"/></svg>
<div class="a" style="left:843.6px;top:327.2px;white-space:nowrap;font-size:8px;color:#cfcfcf;line-height:10px;line-height:12.2px;letter-spacing:0.05px">Nom de la photo 1<br>Nom de la photo 2</div>
<div class="a" style="left:839.8px;top:361px;white-space:nowrap;font-size:8px;color:#e6e6e6;line-height:10px;-webkit-text-stroke:0.25px #e6e6e6;letter-spacing:-0.3px">Pas à pas</div>
<div class="a" style="left:839px;top:373.5px;width:112px;height:15.3px;background:#3a3a3a;border-radius:2px"></div>
<div class="a" style="left:839px;top:373.5px;width:18px;height:15.3px;background:#5c5c5c;border-radius:2px 0 0 2px"></div>
<svg class="a" style="left:843px;top:376.5px" width="10" height="10" viewBox="0 0 10 10"><path d="M1.5 8.5L2 6.5 6.8 1.7 8.3 3.2 3.5 8z" fill="#eee"/></svg>
<div class="a" style="left:888.2px;top:376.9px;white-space:nowrap;font-size:8px;color:#cfcfcf;line-height:10px">Aucun</div>
<div class="a" style="left:829px;top:401.9px;width:131px;height:19.6px;background:#3b3b3b"></div>
<svg class="a" style="left:835.8px;top:409.5px" width="6" height="5" viewBox="0 0 6 5"><path d="M0 0h6L3 4.5z" fill="#d8d8d8"/></svg>
<div class="a" style="left:844.8px;top:406.7px;white-space:nowrap;font-size:7.5px;font-weight:bold;color:#e0e0e0;line-height:10px">Paramètres</div>
<div class="a" style="left:839.8px;top:431px;white-space:nowrap;font-size:8px;color:#cfcfcf;line-height:10px">Forme</div>
<div class="a" style="left:871.3px;top:428.5px;width:78.5px;height:16px;background:#5a5a5a;border:1px solid #3e3e3e;border-radius:2px"></div>
<div class="a" style="left:876.4px;top:431px;white-space:nowrap;font-size:8px;color:#cfcfcf;line-height:10px;color:#e0e0e0">Etoile</div>
<svg class="a" style="left:939.8px;top:434.8px" width="5" height="4" viewBox="0 0 5 4"><path d="M0 0h5L2.5 3z" fill="#eee"/></svg>
<div class="a" style="left:840.5px;top:455.2px;white-space:nowrap;font-size:8px;color:#cfcfcf;line-height:10px">Echelle</div>
<div class="a" style="left:873.9px;top:459.2px;width:45.6px;height:1px;background:#6e6e6e"></div>
<div class="a" style="left:893.6px;top:457.6px;width:4px;height:4px;border-radius:50%;background:#8e8e8e"></div>
<div class="a" style="left:924px;top:451.2px;width:25.8px;height:16.1px;background:#333;border-radius:2px"></div>
<div class="a" style="left:929.8px;top:455px;white-space:nowrap;font-size:8px;color:#cfcfcf;line-height:10px;color:#ddd">5</div>
<div class="a" style="left:944.6px;top:451.8px;width:4.6px;height:7px;background:#686868;border-radius:1px"></div>
<div class="a" style="left:944.6px;top:459.8px;width:4.6px;height:7px;background:#686868;border-radius:1px"></div>
<svg class="a" style="left:945.2px;top:453.8px" width="4" height="3" viewBox="0 0 4 3"><path d="M0 2.5h3.4L1.7 0z" fill="#ccc"/></svg>
<svg class="a" style="left:945.2px;top:461.8px" width="4" height="3" viewBox="0 0 4 3"><path d="M0 0h3.4L1.7 2.5z" fill="#ccc"/></svg>
<div class="a" style="left:829px;top:480.1px;width:131px;height:19.6px;background:#3b3b3b"></div>
<svg class="a" style="left:835.8px;top:487.70000000000005px" width="6" height="5" viewBox="0 0 6 5"><path d="M0 0h6L3 4.5z" fill="#d8d8d8"/></svg>
<div class="a" style="left:844.8px;top:484.90000000000003px;white-space:nowrap;font-size:7.5px;font-weight:bold;color:#e0e0e0;line-height:10px">Options</div>
<div class="a" style="left:839.2px;top:507.3px;width:10px;height:9.8px;background:#3a3a3a;border-radius:1px"></div>
<svg class="a" style="left:839.5px;top:506.0px" width="13" height="11" viewBox="0 0 13 11"><path d="M0.8 6.2L5 10.2 10.9 1.4" fill="none" stroke="#fff" stroke-width="1.9"/></svg>
<div class="a" style="left:852.5px;top:507.2px;white-space:nowrap;font-size:8px;color:#cfcfcf;line-height:10px;color:#dcdcdc">Action obligatoire</div>
<div class="a" style="left:839.2px;top:524.7px;width:10px;height:9.8px;background:#3a3a3a;border-radius:1px"></div>
<div class="a" style="left:852.5px;top:524.6px;white-space:nowrap;font-size:8px;color:#cfcfcf;line-height:10px;color:#dcdcdc">Point d’arrêt</div>
<div class="a" style="left:839.2px;top:542px;width:10px;height:9.8px;background:#3a3a3a;border-radius:1px"></div>
<svg class="a" style="left:839.5px;top:540.7px" width="13" height="11" viewBox="0 0 13 11"><path d="M0.8 6.2L5 10.2 10.9 1.4" fill="none" stroke="#fff" stroke-width="1.9"/></svg>
<div class="a" style="left:852.5px;top:541.9px;white-space:nowrap;font-size:8px;color:#cfcfcf;line-height:10px;color:#dcdcdc">Commentaires autorisés</div>
<div class="a" style="left:839.2px;top:558.3px;width:10px;height:9.8px;background:#3a3a3a;border-radius:1px"></div>
<div class="a" style="left:852.5px;top:558.1999999999999px;white-space:nowrap;font-size:8px;color:#cfcfcf;line-height:10px;color:#dcdcdc">Jump</div>
<!--/RP-->
</body></html>
